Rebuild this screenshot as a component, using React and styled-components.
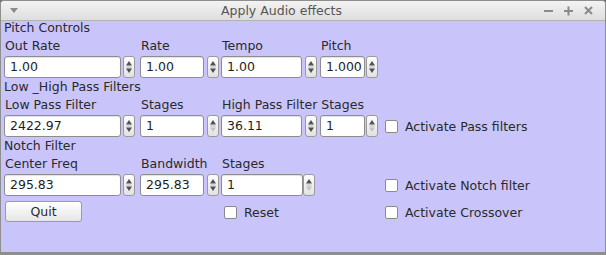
import React from 'react';
import styled, { createGlobalStyle } from 'styled-components';

const Global = createGlobalStyle`
  html, body { margin: 0; padding: 0; background: #6f6f6f; }
  body { font-family: "DejaVu Sans", "Liberation Sans", sans-serif; }
`;

const Window = styled.div`
  width: 606px;
  height: 255px;
  box-sizing: border-box;
  border: 1px solid #8e8e8e;
  border-bottom-width: 3px;
  border-radius: 4px 4px 0 0;
  background: #c9c5fb;
  display: flex;
  flex-direction: column;
  overflow: hidden;
`;

const TitleBar = styled.div`
  height: 19px;
  flex: none;
  display: flex;
  align-items: center;
  background: linear-gradient(#f3f3f3, #dedede);
  border-bottom: 1px solid #b4b4b4;
  color: #555;
  font-size: 12.5px;
  padding: 0 10px 0 8px;
`;

const Title = styled.div`
  flex: 1;
  text-align: center;
  padding-left: 2px;
`;

const Controls = styled.div`
  display: flex;
  gap: 7px;
  align-items: center;
`;

const Form = styled.div`
  display: grid;
  grid-template-columns: 136px 81px 99px 65px 1fr;
  padding: 0 3px;
  color: #2a2a2a;
  font-size: 12.5px;
`;

const Header = styled.div`
  grid-column: 1 / -1;
  line-height: 14px;
  margin-top: ${p => p.$top ?? 2}px;
`;

const FieldBox = styled.div`
  display: flex;
  flex-direction: column;
  margin-top: 4px;
`;

const Label = styled.div`
  line-height: 14px;
  white-space: nowrap;
  padding-left: 1px;
`;

const SpinRow = styled.div`
  display: flex;
  margin-top: 3px;
  gap: ${p => p.$gap}px;
`;

const Input = styled.div`
  width: ${p => p.$w}px;
  height: 22px;
  box-sizing: border-box;
  background: #fff;
  border: 1px solid #8d8d8d;
  border-radius: 3px;
  box-shadow: inset 0 1px 1px rgba(0, 0, 0, 0.12);
  padding-left: 5px;
  line-height: 20px;
  font-size: 12.5px;
  color: #1e1e1e;
`;

const Spinner = styled.div`
  width: 12px;
  height: 22px;
  box-sizing: border-box;
  border: 1px solid #9a9a9a;
  border-radius: 3px;
  background: linear-gradient(#fdfdfd, #e2e2e2);
  display: flex;
  align-items: center;
  justify-content: center;
`;

const CheckCell = styled.div`
  display: flex;
  align-items: center;
  gap: 7px;
  height: 22px;
  align-self: end;
  margin-left: ${p => p.$left || 0}px;
  grid-column: ${p => p.$col};
  white-space: nowrap;
`;

const Box = styled.div`
  width: 13px;
  height: 13px;
  box-sizing: border-box;
  background: #fff;
  border: 1px solid #8a8a8a;
  border-radius: 2px;
`;

const BottomRow = styled.div`
  grid-column: 1 / -1;
  display: grid;
  grid-template-columns: subgrid;
  margin-top: 5px;
`;

const Button = styled.div`
  width: 77px;
  height: 21px;
  box-sizing: border-box;
  margin-left: 1px;
  border: 1px solid #9b9b9b;
  border-radius: 3px;
  background: linear-gradient(#ffffff, #e6e6e6);
  text-align: center;
  line-height: 19px;
`;

function Arrows({ downOff }) {
  return (
    <svg width="8" height="16" viewBox="0 0 8 16">
      <path d="M4 2 L7 6.5 L1 6.5 Z" fill="#505050" />
      <line x1="1.5" y1="8" x2="6.5" y2="8" stroke="#b8b8b8" strokeWidth="1" />
      <path d="M4 14 L7 9.5 L1 9.5 Z" fill={downOff ? '#c4c4c4' : '#505050'} />
    </svg>
  );
}

function Field({ label, value, w, gap = 3, downOff }) {
  return (
    <FieldBox>
      <Label>{label || '\u00a0'}</Label>
      <SpinRow $gap={gap}>
        <Input $w={w}>{value}</Input>
        <Spinner><Arrows downOff={downOff} /></Spinner>
      </SpinRow>
    </FieldBox>
  );
}

function Check({ label, col, left }) {
  return (
    <CheckCell $col={col} $left={left}>
      <Box />
      <span>{label}</span>
    </CheckCell>
  );
}

export default function App() {
  return (
    <>
      <Global />
      <Window>
        <TitleBar>
          <svg width="10" height="8" viewBox="0 0 10 8">
            <path d="M1 1 L9 1 L5 6 Z" fill="#8a8a8a" />
          </svg>
          <Title>Apply Audio effects</Title>
          <Controls>
            <svg width="13" height="13" viewBox="0 0 13 13">
              <line x1="2" y1="7" x2="11" y2="7" stroke="#8a8a8a" strokeWidth="2" />
            </svg>
            <svg width="13" height="13" viewBox="0 0 13 13">
              <line x1="2" y1="7" x2="11" y2="7" stroke="#8a8a8a" strokeWidth="2" />
              <line x1="6.5" y1="2.5" x2="6.5" y2="11.5" stroke="#8a8a8a" strokeWidth="2" />
            </svg>
            <svg width="13" height="13" viewBox="0 0 13 13">
              <line x1="3" y1="3" x2="10" y2="10" stroke="#8a8a8a" strokeWidth="2" />
              <line x1="10" y1="3" x2="3" y2="10" stroke="#8a8a8a" strokeWidth="2" />
            </svg>
          </Controls>
        </TitleBar>
        <Form>
          <Header $top={0}>Pitch Controls</Header>
          <Field label="Out Rate" value="1.00" w={117} gap={2} />
          <Field label="Rate" value="1.00" w={64} />
          <Field label="Tempo" value="1.00" w={81} />
          <Field label="Pitch" value="1.000" w={45} gap={1} />

          <Header>Low _High Pass Filters</Header>
          <Field label="Low Pass Filter" value="2422.97" w={117} gap={2} />
          <Field label="Stages" value="1" w={64} downOff />
          <Field label="High Pass Filter Stages" value="36.11" w={81} />
          <Field value="1" w={45} gap={1} downOff />
          <Check label="Activate Pass filters" col="5" />

          <Header>Notch Filter</Header>
          <Field label="Center Freq" value="295.83" w={117} gap={2} />
          <Field label="Bandwidth" value="295.83" w={64} />
          <Field label="Stages" value="1" w={82} gap={0} downOff />
          <Check label="Activate Notch filter" col="5" />

          <BottomRow>
            <Button>Quit</Button>
            <Check label="Reset" col="3" left={3} />
            <Check label="Activate Crossover" col="5" />
          </BottomRow>
        </Form>
      </Window>
    </>
  );
}
